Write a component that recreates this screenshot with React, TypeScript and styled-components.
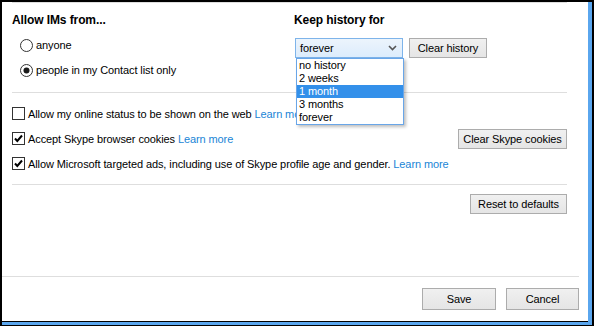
import styled, { createGlobalStyle } from 'styled-components'

const GlobalStyle = createGlobalStyle`
  html, body {
    margin: 0;
    padding: 0;
    background: #fff;
  }
  body {
    font-family: "Liberation Sans", Arial, sans-serif;
    font-size: 11px;
    letter-spacing: -0.1px;
    color: #000;
  }
`

const Window = styled.div`
  width: 594px;
  height: 326px;
  box-sizing: border-box;
  display: flex;
  border-top: 2px solid #000;
  border-left: 2px solid #000;
  border-right: 2px solid #000;
  border-bottom: 1px solid #000;
`

const Frame = styled.div`
  flex: 1;
  display: flex;
  flex-direction: column;
  border-right: 4px solid #5aa6ee;
  border-bottom: 3px solid #5aa6ee;
`

const Content = styled.div`
  flex: 1;
  display: flex;
  flex-direction: column;
  background: #fff;
  border-bottom: 1px solid #000;
`

const Sections = styled.div`
  padding: 0 21px 0 10px;
  display: flex;
  flex-direction: column;
`

const Rule = styled.div<{ $top?: number }>`
  height: 1px;
  background: #dedede;
  margin-top: ${p => p.$top ?? 0}px;
`

const Columns = styled.div`
  display: grid;
  grid-template-columns: 282px 1fr;
  height: 89px;
`

const Column = styled.div`
  position: relative;
  display: flex;
  flex-direction: column;
`

const Heading = styled.div`
  font-size: 12px;
  font-weight: bold;
  line-height: 16px;
  margin-top: 9px;
`

const RadioList = styled.div`
  display: flex;
  flex-direction: column;
  gap: 5px;
  margin-top: 7px;
  padding-left: 8px;
`

const OptionRow = styled.label`
  display: flex;
  align-items: center;
  gap: 3px;
  height: 20px;
`

const Controls = styled.div`
  display: flex;
  gap: 6px;
  margin-top: 10px;
  padding-left: 1px;
`

const Select = styled.div`
  width: 108px;
  height: 20px;
  box-sizing: border-box;
  display: flex;
  align-items: center;
  justify-content: space-between;
  padding: 0 5px 0 4px;
  border: 1px solid #7eb4ea;
  background: linear-gradient(#ecf4fc, #dcecfc);
`

const Button = styled.button<{ $w: number; $h?: number }>`
  width: ${p => p.$w}px;
  height: ${p => p.$h ?? 20}px;
  box-sizing: border-box;
  padding: 0;
  font-family: inherit;
  font-size: 11px;
  letter-spacing: inherit;
  color: #000;
  border: 1px solid #acacac;
  border-radius: 0;
  background: linear-gradient(#f0f0f0, #e5e5e5);
`

const DropList = styled.ul`
  position: absolute;
  top: 55px;
  left: 2px;
  width: 108px;
  box-sizing: border-box;
  margin: 0;
  padding: 0;
  list-style: none;
  background: #fff;
  border: 1px solid #69a6e8;
  box-shadow: 2px 2px 3px rgba(0, 0, 0, 0.25);
`

const DropItem = styled.li<{ $active?: boolean }>`
  height: 13px;
  line-height: 13px;
  padding-left: 2px;
  background: ${p => (p.$active ? '#3390ea' : 'transparent')};
  color: ${p => (p.$active ? '#fff' : '#000')};
`

const CheckList = styled.div`
  display: flex;
  flex-direction: column;
  padding-top: 8px;
`

const CheckRow = styled.div`
  display: flex;
  align-items: center;
  justify-content: space-between;
  height: 25px;
`

const CheckLabel = styled.label`
  display: flex;
  align-items: center;
  gap: 3px;
  white-space: nowrap;
`

const Link = styled.a`
  color: #1a85d6;
  text-decoration: none;
`

const RightRow = styled.div`
  display: flex;
  justify-content: flex-end;
  margin-top: 9px;
`

const Footer = styled.div`
  margin-top: auto;
  margin-right: 9px;
  border-top: 1px solid #dedede;
  padding: 11px 0;
  display: flex;
  justify-content: flex-end;
  gap: 10px;
`

function Radio({ checked }: { checked?: boolean }) {
  return (
    <svg width="13" height="13" viewBox="0 0 13 13">
      <circle cx="6.5" cy="6.5" r="6" fill="#fff" stroke="#333" />
      {checked && <circle cx="6.5" cy="6.5" r="3" fill="#1a1a1a" />}
    </svg>
  )
}

function Checkbox({ checked }: { checked?: boolean }) {
  return (
    <svg width="13" height="13" viewBox="0 0 13 13">
      <rect x="0.5" y="0.5" width="12" height="12" fill="#fff" stroke="#333" />
      {checked && (
        <path d="M3 6.5 L5.3 9 L10 3.5" fill="none" stroke="#000" strokeWidth="2" />
      )}
    </svg>
  )
}

function Chevron() {
  return (
    <svg width="9" height="6" viewBox="0 0 9 6">
      <path d="M1 1 L4.5 4.5 L8 1" fill="none" stroke="#555" strokeWidth="1.6" />
    </svg>
  )
}

const historyOptions = ['no history', '2 weeks', '1 month', '3 months', 'forever']

export default function App() {
  return (
    <>
      <GlobalStyle />
      <Window>
        <Frame>
          <Content>
            <Sections>
              <Rule />
              <Columns>
                <Column>
                  <Heading>Allow IMs from...</Heading>
                  <RadioList>
                    <OptionRow>
                      <Radio />
                      anyone
                    </OptionRow>
                    <OptionRow>
                      <Radio checked />
                      people in my Contact list only
                    </OptionRow>
                  </RadioList>
                </Column>
                <Column>
                  <Heading>Keep history for</Heading>
                  <Controls>
                    <Select>
                      <span>forever</span>
                      <Chevron />
                    </Select>
                    <Button $w={78}>Clear history</Button>
                  </Controls>
                  <DropList>
                    {historyOptions.map(o => (
                      <DropItem key={o} $active={o === '1 month'}>
                        {o}
                      </DropItem>
                    ))}
                  </DropList>
                </Column>
              </Columns>
              <Rule />
              <CheckList>
                <CheckRow>
                  <CheckLabel>
                    <Checkbox />
                    <span>
                      Allow my online status to be shown on the web <Link>Learn more</Link>
                    </span>
                  </CheckLabel>
                </CheckRow>
                <CheckRow>
                  <CheckLabel>
                    <Checkbox checked />
                    <span>
                      Accept Skype browser cookies <Link>Learn more</Link>
                    </span>
                  </CheckLabel>
                  <Button $w={109}>Clear Skype cookies</Button>
                </CheckRow>
                <CheckRow>
                  <CheckLabel>
                    <Checkbox checked />
                    <span>
                      Allow Microsoft targeted ads, including use of Skype profile age and gender.{' '}
                      <Link>Learn more</Link>
                    </span>
                  </CheckLabel>
                </CheckRow>
              </CheckList>
              <Rule $top={8} />
              <RightRow>
                <Button $w={97}>Reset to defaults</Button>
              </RightRow>
            </Sections>
            <Footer>
              <Button $w={74} $h={22}>Save</Button>
              <Button $w={73} $h={22}>Cancel</Button>
            </Footer>
          </Content>
        </Frame>
      </Window>
    </>
  )
}
